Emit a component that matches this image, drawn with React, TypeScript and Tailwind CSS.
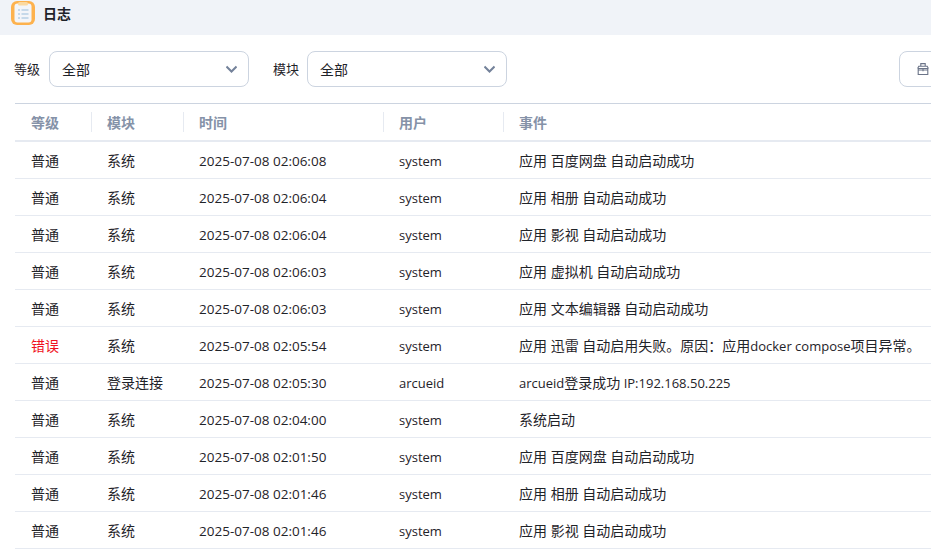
const rows = [
  ["普通", "系统", "2025-07-08 02:06:08", "system", "应用 百度网盘 自动启动成功"],
  ["普通", "系统", "2025-07-08 02:06:04", "system", "应用 相册 自动启动成功"],
  ["普通", "系统", "2025-07-08 02:06:04", "system", "应用 影视 自动启动成功"],
  ["普通", "系统", "2025-07-08 02:06:03", "system", "应用 虚拟机 自动启动成功"],
  ["普通", "系统", "2025-07-08 02:06:03", "system", "应用 文本编辑器 自动启动成功"],
  ["错误", "系统", "2025-07-08 02:05:54", "system", "应用 迅雷 自动启用失败。原因：应用docker compose项目异常。"],
  ["普通", "登录连接", "2025-07-08 02:05:30", "arcueid", "arcueid登录成功 IP:192.168.50.225"],
  ["普通", "系统", "2025-07-08 02:04:00", "system", "系统启动"],
  ["普通", "系统", "2025-07-08 02:01:50", "system", "应用 百度网盘 自动启动成功"],
  ["普通", "系统", "2025-07-08 02:01:46", "system", "应用 相册 自动启动成功"],
  ["普通", "系统", "2025-07-08 02:01:46", "system", "应用 影视 自动启动成功"],
];

const headers = ["等级", "模块", "时间", "用户", "事件"];

function LogIcon() {
  return (
    <svg width="24" height="24" viewBox="0 0 24 24">
      <rect x="0" y="0" width="24" height="24" rx="6" fill="#fdb24e" />
      <rect x="3.5" y="2.5" width="17" height="19" rx="3" fill="#f3f5f9" />
      <rect x="7" y="1" width="10" height="3.5" rx="1.5" fill="#fbd9a0" />
      <g fill="#c6d9ea">
        <rect x="7" y="8" width="2" height="2" />
        <rect x="10.5" y="8" width="7" height="2" />
        <rect x="7" y="12" width="2" height="2" />
        <rect x="10.5" y="12" width="7" height="2" />
        <rect x="7" y="16" width="2" height="2" />
        <rect x="10.5" y="16" width="7" height="2" />
      </g>
    </svg>
  );
}

function Select() {
  return (
    <div className="flex h-9 w-[200px] items-center justify-between rounded-lg border border-[#ccd4e0] pl-3 pr-[11px]">
      <span>全部</span>
      <svg width="11" height="8" viewBox="0 0 11 8" fill="none" stroke="#74829a" strokeWidth="2">
        <path d="M.5 1.5l5 5 5-5" />
      </svg>
    </div>
  );
}

// latin runs are set a bit smaller than the CJK around them
function Mixed({ text }: { text: string }) {
  return (
    <>
      {text.split(/([A-Za-z0-9:.\- ]{2,})/).map((part, i) =>
        i % 2 === 1 ? (
          <span key={i} className="text-[13px]">
            {part}
          </span>
        ) : (
          part
        ),
      )}
    </>
  );
}

export default function App() {
  return (
    <div className="h-[558px] w-[931px] overflow-hidden bg-white font-['Open_Sans','Noto_Sans_CJK_SC',sans-serif] text-[14px] text-[#1f2329]">
      <div className="flex h-[35px] items-center gap-2 bg-[#f0f3f8] pb-[9px] pl-[11px] font-semibold">
        <LogIcon />
        <span>日志</span>
      </div>

      <div className="flex items-center pl-[14px] pt-4">
        <span className="mr-[9px] pt-[2px] text-[13px]">等级</span>
        <Select />
        <span className="ml-6 mr-2 pt-[2px] text-[13px]">模块</span>
        <Select />
        <div className="ml-auto -mr-[60px] flex h-9 w-[92px] items-center rounded-lg border border-[#ccd4e0] pl-[17px]">
          <svg width="12" height="12" viewBox="0 0 12 12" fill="none" stroke="#6b7488" strokeWidth="1.1">
            <path d="M.6 5.5h10.8M1.2 5.5v6h9.6v-6M.6 5.5l1.2-2.3h8.4l1.2 2.3M3.8 3.2V.6h4.4v2.6M1.2 7h9.6M6 6v2.2" />
          </svg>
        </div>
      </div>

      <div className="ml-[15px] mt-4 border-t border-[#ccd4e0]">
        <div className="grid h-[38px] grid-cols-[76px_92px_200px_120px_1fr] items-center border-b-2 border-[#e6eaf1] font-semibold text-[#8592a8]">
          {headers.map((h, i) => (
            <div key={h} className={`flex h-5 items-center ${i > 0 ? "border-l border-[#e6eaf1] pl-[15px]" : "pl-4"}`}>
              {h}
            </div>
          ))}
        </div>
        {rows.map((r, i) => (
          <div key={i} className="grid h-[37px] grid-cols-[76px_92px_200px_120px_1fr] items-center border-b border-[#e6eaf1] pt-px">
            <div className={`pl-4 ${r[0] === "错误" ? "text-[#f01020]" : ""}`}>{r[0]}</div>
            <div className="pl-4">{r[1]}</div>
            <div className="whitespace-nowrap pl-4 pt-px text-[13.5px]">{r[2]}</div>
            <div className="pl-4 pt-[3px] text-[13px]">{r[3]}</div>
            <div className="whitespace-nowrap pl-4">
              <Mixed text={r[4]} />
            </div>
          </div>
        ))}
      </div>
    </div>
  );
}
